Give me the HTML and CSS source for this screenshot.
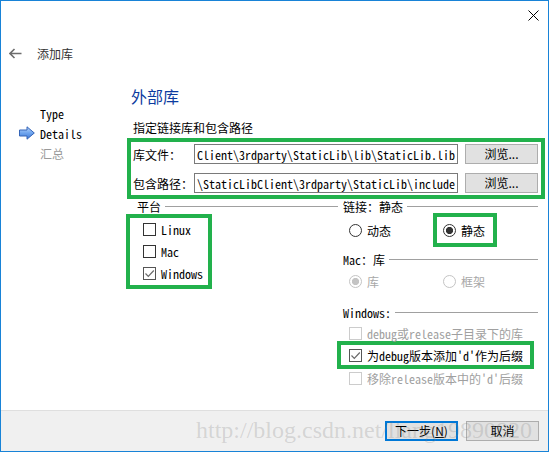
FILE: index.html
```html
<!DOCTYPE html>
<html lang="zh-CN">
<head>
    <meta charset="UTF-8">
    <title>添加库</title>
    <link rel="stylesheet" href="styles.css">
</head>
<body>

<div class="window">
    <!-- barra de titulo -->
    <div class="titlebar">
        <svg class="close" width="11" height="11" viewBox="0 0 11 11">
            <path d="M0.5 0.5 L10.5 10.5 M10.5 0.5 L0.5 10.5" stroke="#000" stroke-width="1" fill="none"/>
        </svg>
    </div>

    <div class="nav">
        <svg class="back" width="13" height="11" viewBox="0 0 13 11">
            <path d="M12.5 5.5 H1.5 M5.5 1 L1 5.5 L5.5 10" stroke="#6d6d6d" stroke-width="1.6" fill="none"/>
        </svg>
        <span class="nav-title">添加库</span>
    </div>

    <div class="main">
        <!-- pasos -->
        <ul class="steps">
            <li class="step mono"><span class="step-icon"></span>Type</li>
            <li class="step mono">
                <svg class="step-icon" width="16" height="14" viewBox="0 0 16 14">
                    <defs>
                        <linearGradient id="arrowFill" x1="0" y1="0" x2="0" y2="1">
                            <stop offset="0" stop-color="#b9d6fb"/>
                            <stop offset="0.5" stop-color="#6fa5ee"/>
                            <stop offset="1" stop-color="#3d78d6"/>
                        </linearGradient>
                    </defs>
                    <path d="M0.5 4 H8 V0.8 L15.3 7 L8 13.2 V10 H0.5 Z" fill="url(#arrowFill)" stroke="#3565b8" stroke-width="1"/>
                </svg>Details
            </li>
            <li class="step future"><span class="step-icon"></span>汇总</li>
        </ul>

        <div class="page">
            <h1 class="page-title">外部库</h1>
            <p class="page-sub">指定链接库和包含路径</p>

            <div class="mark paths">
                <label>库文件：</label>
                <div class="field mono"><span>Client\3rdparty\StaticLib\lib\StaticLib.lib</span></div>
                <button class="btn">浏览...</button>

                <label>包含路径：</label>
                <div class="field mono"><span>\StaticLibClient\3rdparty\StaticLib\include</span></div>
                <button class="btn">浏览...</button>
            </div>

            <div class="options">
                <!-- plataforma -->
                <div class="col col-left">
                    <div class="group-title first"><span>平台</span></div>
                    <div class="mark platforms">
                        <label class="check mono"><span class="box"></span>Linux</label>
                        <label class="check mono"><span class="box"></span>Mac</label>
                        <label class="check mono">
                            <span class="box checked">
                                <svg width="11" height="11" viewBox="0 0 11 11"><path d="M1.5 5.5 L4.3 8.3 L9.8 2.5" stroke="#6a6a6a" stroke-width="1.2" fill="none"/></svg>
                            </span>Windows
                        </label>
                    </div>
                </div>

                <!-- enlace / mac / windows -->
                <div class="col col-right">
                    <div class="group-title link-title"><span>链接：静态</span></div>
                    <div class="radio-row tall">
                        <label class="radio-item first"><span class="radio"></span>动态</label>
                        <div class="mark static-mark">
                            <label class="radio-item"><span class="radio on"></span>静态</label>
                        </div>
                    </div>

                    <div class="group-title mac-title"><span class="mono">Mac：库</span></div>
                    <div class="radio-row">
                        <label class="radio-item first disabled"><span class="radio on"></span>库</label>
                        <label class="radio-item second disabled"><span class="radio"></span>框架</label>
                    </div>

                    <div class="group-title win-title"><span class="mono">Windows:</span></div>
                    <label class="check mono opt disabled"><span class="box"></span>debug或release子目录下的库</label>
                    <div class="mark suffix-mark">
                        <label class="check mono">
                            <span class="box checked">
                                <svg width="11" height="11" viewBox="0 0 11 11"><path d="M1.5 5.5 L4.3 8.3 L9.8 2.5" stroke="#6a6a6a" stroke-width="1.2" fill="none"/></svg>
                            </span>为debug版本添加'd'作为后缀
                        </label>
                    </div>
                    <label class="check mono opt last disabled"><span class="box"></span>移除release版本中的'd'后缀</label>
                </div>
            </div>
        </div>
    </div>

    <div class="footer">
        <button class="btn default">下一步(<u>N</u>)</button>
        <button class="btn">取消</button>
        <span class="watermark">http://blog.csdn.net/liang19890820</span>
    </div>
</div>

</body>
</html>
```

FILE: styles.css
```css
* {
    box-sizing: border-box;
}
body {
    margin: 0;
    font-family: "Noto Sans CJK SC", sans-serif;
    font-size: 12px;
    color: #000;
    background: #fff;
}
.mono {
    font-family: "Noto Sans Mono CJK SC", "Liberation Mono", "Noto Sans CJK SC", monospace;
}
.window {
    position: relative;
    width: 549px;
    height: 452px;
    border: 1px solid #1883d7;
    display: flex;
    flex-direction: column;
    background: #fff;
    overflow: hidden;
}
.titlebar {
    height: 28px;
    display: flex;
    justify-content: flex-end;
    align-items: center;
    padding-right: 9px;
}
.nav {
    height: 48px;
    display: flex;
    align-items: center;
    padding-left: 8px;
}
.back {
    margin-right: 15px;
}
.nav-title {
    color: #333;
    font-size: 12px;
}
.main {
    flex: 1;
    display: flex;
}
.steps {
    width: 126px;
    list-style: none;
    margin: 0;
    padding: 26px 0 0 18px;
}
.step {
    display: flex;
    align-items: center;
    height: 20px;
}
.step-icon {
    display: block;
    width: 16px;
    height: 14px;
    margin-right: 5px;
    flex: none;
}
.step.future {
    color: #9a9a9a;
}
.page {
    width: 418px;
    padding-top: 7px;
}
.page-title {
    margin: 0;
    padding-left: 4px;
    font-size: 16px;
    line-height: 24px;
    font-weight: normal;
    color: #0c3b9f;
}
.page-sub {
    margin: 10px 0 0;
    padding-left: 6px;
    line-height: 20px;
}
.mark {
    border: 4px solid #22b14c;
}
.paths {
    display: grid;
    grid-template-columns: 54px 264px 73px;
    grid-auto-rows: 20px;
    column-gap: 7px;
    row-gap: 9px;
    align-items: center;
    padding: 2px 3px 2px 2px;
}
.paths label {
    white-space: nowrap;
}
.field {
    height: 20px;
    border: 1px solid #7a7a7a;
    background: #fff;
    display: flex;
    justify-content: flex-end;
    align-items: center;
    overflow: hidden;
    white-space: nowrap;
    padding: 0 2px;
}
.btn {
    height: 20px;
    width: 73px;
    border: 1px solid #adadad;
    background: #e1e1e1;
    font-family: "Noto Sans CJK SC", sans-serif;
    font-size: 12px;
    line-height: 16px;
    color: #000;
    padding: 0;
}
.btn.default {
    border: 2px solid #0078d7;
}
.btn u {
    text-decoration: underline;
}
.options {
    display: grid;
    grid-template-columns: 211px 200px;
}
.group-title {
    display: flex;
    align-items: center;
    white-space: nowrap;
}
.group-title::after {
    content: "";
    flex: 1;
    border-top: 1px solid #a0a0a0;
    margin-left: 4px;
}
.group-title.first {
    height: 15px;
    padding-left: 10px;
}
.col-right .group-title {
    padding-left: 5px;
}
.link-title {
    height: 14px;
}
.mac-title {
    height: 24px;
}
.win-title {
    height: 20px;
    margin-top: 11px;
}
.platforms {
    width: 86px;
    margin-left: -1px;
    padding: 0 0 1px 13px;
}
.check {
    display: flex;
    align-items: center;
    height: 22px;
    white-space: nowrap;
}
.box {
    width: 13px;
    height: 13px;
    border: 1px solid #333;
    background: #fff;
    margin-right: 5px;
    flex: none;
    display: flex;
    align-items: center;
    justify-content: center;
}
.box.checked {
    border-color: #555;
}
.check.disabled {
    color: #a0a0a0;
}
.check.disabled .box {
    border-color: #cccccc;
}
.check.opt {
    padding-left: 11px;
}
.check.last {
    height: 18px;
}
.suffix-mark {
    width: 197px;
    height: 28px;
    margin: -3px 0 0 -1px;
    padding-left: 8px;
}
.suffix-mark .check {
    height: 20px;
}
.radio-row {
    display: grid;
    grid-template-columns: 95px auto;
    align-items: center;
    height: 20px;
}
.radio-row.tall {
    height: 34px;
}
.radio-item {
    display: flex;
    align-items: center;
    white-space: nowrap;
}
.radio-item.first {
    padding-left: 11px;
}
.radio-item.second {
    padding-left: 10px;
}
.radio {
    width: 13px;
    height: 13px;
    border: 1px solid #333;
    border-radius: 50%;
    background: #fff;
    margin-right: 5px;
    flex: none;
}
.radio.on {
    background: radial-gradient(circle, #333 3.3px, #fff 3.9px);
}
.radio-item.disabled {
    color: #a8a8a8;
}
.radio-item.disabled .radio {
    border-color: #c4c4c4;
}
.radio-item.disabled .radio.on {
    background: radial-gradient(circle, #c4c4c4 3.3px, #fff 3.9px);
}
.static-mark {
    width: 64px;
    height: 34px;
    padding-left: 6px;
    display: flex;
    align-items: center;
}
.footer {
    position: relative;
    height: 41px;
    border-top: 1px solid #dfdfdf;
    background: #f0f0f0;
    display: flex;
    justify-content: flex-end;
    align-items: center;
    gap: 8px;
    padding-right: 9px;
}
.watermark {
    position: absolute;
    left: 195px;
    top: 7px;
    font-family: "Liberation Serif", serif;
    font-size: 24px;
    line-height: 24px;
    color: rgba(120, 120, 120, 0.24);
    pointer-events: none;
    white-space: nowrap;
}
```
